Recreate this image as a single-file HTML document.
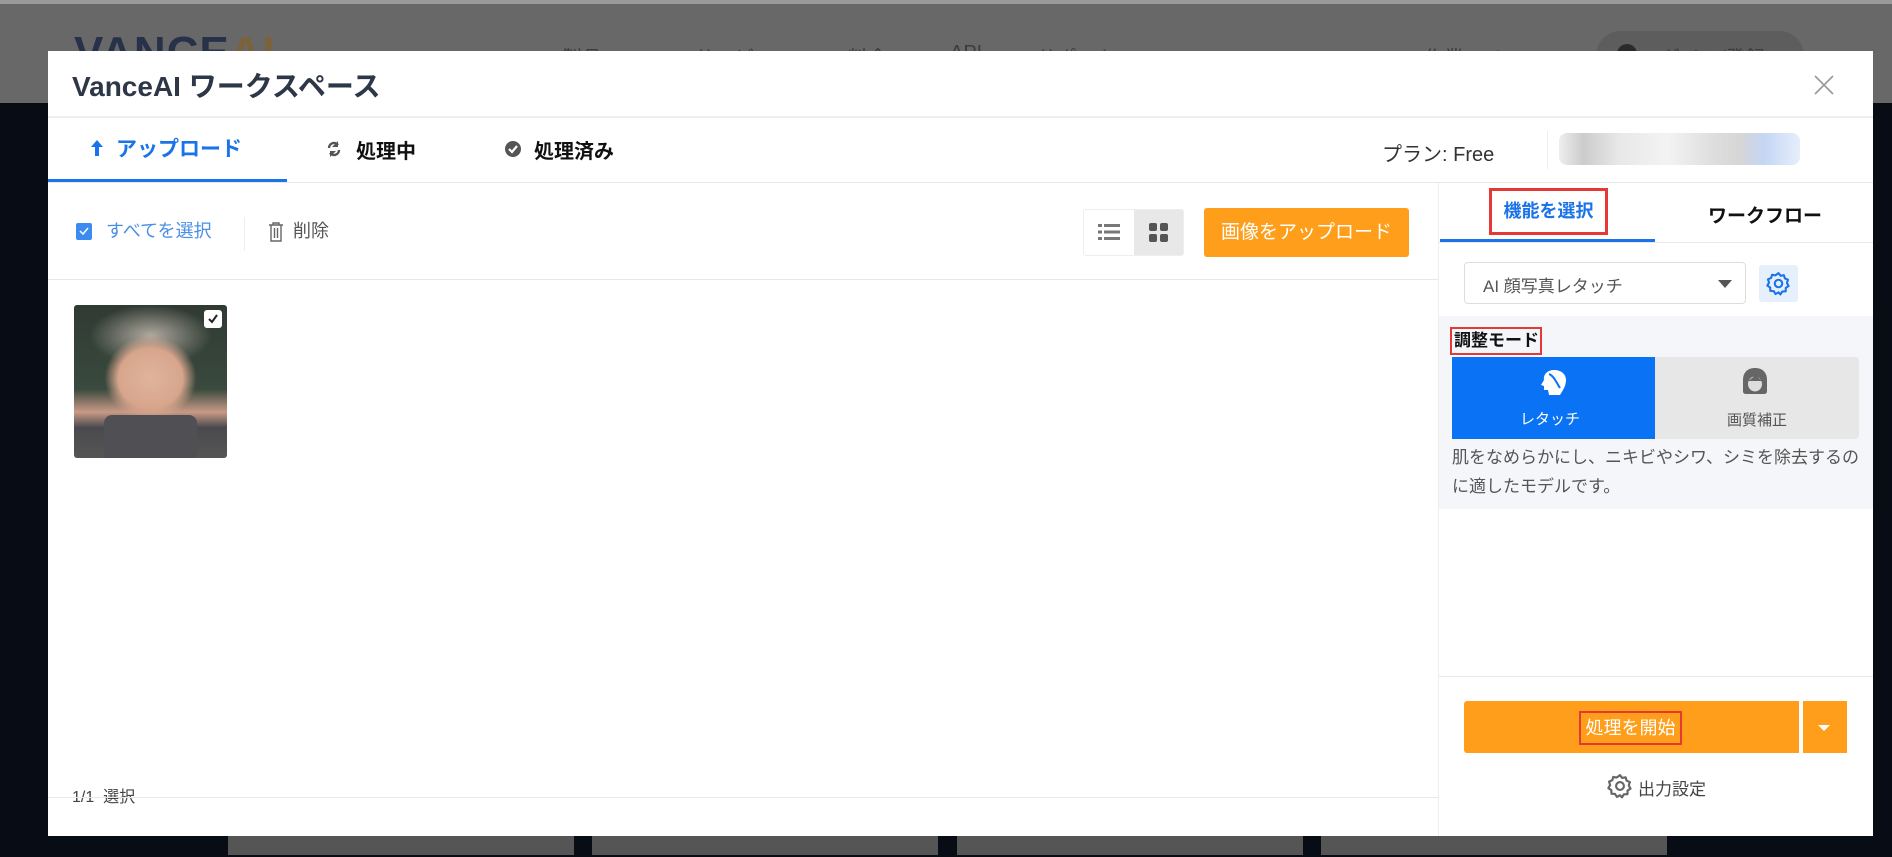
<!DOCTYPE html>
<html><head><meta charset="utf-8"><style>
*{box-sizing:border-box;margin:0;padding:0}
body{width:1892px;height:857px;overflow:hidden;background:#070c15;font-family:"Liberation Sans","Noto Sans CJK JP",sans-serif;position:relative}
.a{position:absolute}
.hdr{left:0;top:0;width:1892px;height:103px;background:#686868;border-top:4px solid #9a9a9a}
.hdr span{position:absolute;top:38px;font-size:20px;color:#3c3c3c}
.modal{left:48px;top:51px;width:1825px;height:785px;background:#fff}
.line{background:#e8e8e8;height:1px}
.t{white-space:nowrap}
</style></head><body>
<div class="a hdr">
 <div class="a t" style="left:74px;top:24px;font-size:44px;font-weight:bold;color:#27324a;letter-spacing:1px">VANCE<span style="position:static;color:#7c6238;font-size:44px">AI</span></div>
 <span style="left:562px">製品</span><span style="left:676px">AIサービス</span><span style="left:848px">料金</span><span style="left:950px">API</span><span style="left:1037px">サポート</span><span style="left:1424px">作業スペース</span>
 <div class="a" style="left:1596px;top:27px;width:208px;height:50px;border-radius:25px;background:#5d5d5d"></div>
 <span style="left:1640px">ログイン/登録</span>
 <div class="a" style="left:1617px;top:40px;width:20px;height:24px;border-radius:10px;background:#2a2a2a"></div>
</div>
<div class="a" style="left:228px;top:836px;width:346px;height:19px;background:#555"></div>
<div class="a" style="left:592px;top:836px;width:346px;height:19px;background:#555"></div>
<div class="a" style="left:957px;top:836px;width:346px;height:19px;background:#555"></div>
<div class="a" style="left:1321px;top:836px;width:346px;height:19px;background:#555"></div>

<div class="a modal">
 <div class="a t" style="left:24px;top:14px;font-size:28px;font-weight:bold;color:#2d3748">VanceAI ワークスペース</div>
 <svg class="a" style="left:1764px;top:22px" width="24" height="24" viewBox="0 0 24 24"><path d="M3 3L21 21M21 3L3 21" stroke="#999" stroke-width="1.6"/></svg>
 <div class="a line" style="left:0;top:65px;width:1825px;height:2px;background:#eee"></div>
 <!-- tabs -->
 <svg class="a" style="left:42px;top:87px" width="14" height="20" viewBox="0 0 14 20"><path d="M7 2L1 9H5V18H9V9H13Z" fill="#1a73e8"/></svg>
 <div class="a t" style="left:68px;top:82px;font-size:21px;font-weight:bold;color:#1a73e8">アップロード</div>
 <svg class="a" style="left:278px;top:89px" width="16" height="18" viewBox="0 0 16 18"><path d="M3 8A5 5 0 0 1 12 5M13 10A5 5 0 0 1 4 13" stroke="#555" stroke-width="2.4" fill="none"/><path d="M12 1V7H6Z" fill="#555"/><path d="M4 17V11H10Z" fill="#555"/></svg>
 <div class="a t" style="left:308px;top:84px;font-size:20px;font-weight:bold;color:#111">処理中</div>
 <svg class="a" style="left:456px;top:89px" width="18" height="18" viewBox="0 0 18 18"><circle cx="9" cy="9" r="8" fill="#555"/><path d="M5 9L8 12L13 6" stroke="#fff" stroke-width="2.2" fill="none"/></svg>
 <div class="a t" style="left:486px;top:84px;font-size:20px;font-weight:bold;color:#111">処理済み</div>
 <div class="a" style="left:0;top:128px;width:239px;height:3px;background:#1a73e8"></div>
 <div class="a t" style="left:1334px;top:87px;font-size:20px;color:#333">プラン: Free</div>
 <div class="a" style="left:1499px;top:80px;width:1px;height:38px;background:#eee"></div>
 <div class="a" style="left:1511px;top:82px;width:241px;height:32px;border-radius:8px;background:linear-gradient(90deg,#eee 0,#ccc 10%,#e8e8e8 25%,#f3f3f3 45%,#ddd 65%,#d6d6d6 75%,#c4d6f5 85%,#e6eefb 100%)"></div>
 <div class="a line" style="left:0;top:131px;width:1825px"></div>
 <!-- left toolbar -->
 <div class="a" style="left:28px;top:172px;width:16px;height:17px;border-radius:2px;background:#3b8bf0"></div>
 <svg class="a" style="left:30px;top:174px" width="12" height="12" viewBox="0 0 12 12"><path d="M2 6L5 9L10 3" stroke="#fff" stroke-width="1.5" fill="none"/></svg>
 <div class="a t" style="left:58px;top:166px;font-size:18px;color:#4a8fe6">すべてを選択</div>
 <div class="a" style="left:196px;top:166px;width:1px;height:34px;background:#eee"></div>
 <svg class="a" style="left:220px;top:170px" width="16" height="22" viewBox="0 0 16 22"><path d="M1 4H15M5 4V2H11V4M3 4V20H13V4M6.5 7V17M9.5 7V17" stroke="#666" stroke-width="1.4" fill="none"/></svg>
 <div class="a t" style="left:245px;top:166px;font-size:18px;color:#555">削除</div>
 <div class="a" style="left:1035px;top:158px;width:101px;height:47px;border:1px solid #eee;border-radius:3px"></div>
 <div class="a" style="left:1086px;top:159px;width:49px;height:45px;background:#e8e8e8"></div>
 <svg class="a" style="left:1050px;top:172px" width="22" height="18" viewBox="0 0 22 18"><g fill="#777"><rect x="0" y="1" width="4" height="3"/><rect x="6" y="1" width="16" height="3"/><rect x="0" y="7.5" width="4" height="3"/><rect x="6" y="7.5" width="16" height="3"/><rect x="0" y="14" width="4" height="3"/><rect x="6" y="14" width="16" height="3"/></g></svg>
 <svg class="a" style="left:1101px;top:172px" width="19" height="19" viewBox="0 0 19 19"><g fill="#555"><rect x="0" y="0" width="8" height="8" rx="2"/><rect x="11" y="0" width="8" height="8" rx="2"/><rect x="0" y="11" width="8" height="8" rx="2"/><rect x="11" y="11" width="8" height="8" rx="2"/></g></svg>
 <div class="a t" style="left:1156px;top:157px;width:205px;height:49px;background:#ff9e1b;border-radius:3px;color:#fff;font-size:19px;text-align:center;line-height:49px">画像をアップロード</div>
 <div class="a line" style="left:0;top:228px;width:1390px"></div>
 <!-- thumb -->
 <div class="a" style="left:26px;top:254px;width:153px;height:153px;border-radius:3px;overflow:hidden;background:radial-gradient(ellipse 30% 28% at 50% 48%,#e0b49c 0,#d7a58c 70%,transparent 100%),radial-gradient(ellipse 40% 20% at 50% 20%,#b0a89e 0,transparent 100%),linear-gradient(180deg,#2f3a33 0,#3a4a3e 55%,#c99a86 70%,#4a4a4e 80%,#555 100%)">
  <div class="a" style="left:30px;top:110px;width:93px;height:43px;background:#505054;border-radius:8px 8px 0 0"></div>
  <div class="a" style="left:130px;top:5px;width:18px;height:18px;background:#fff;border-radius:3px"></div>
  <svg class="a" style="left:133px;top:8px" width="12" height="12" viewBox="0 0 12 12"><path d="M2 6L5 9L10 2" stroke="#222" stroke-width="2" fill="none"/></svg>
 </div>
 <div class="a t" style="left:24px;top:732px;font-size:16px;color:#444">1/1&nbsp; 選択</div>
 <div class="a line" style="left:0;top:746px;width:1390px"></div>
 <!-- right panel -->
 <div class="a" style="left:1390px;top:132px;width:1px;height:653px;background:#eee"></div>
 <div class="a t" style="left:1441px;top:137px;width:119px;height:47px;border:3px solid #e53935;color:#1a73e8;font-weight:bold;font-size:18px;text-align:center;line-height:41px">機能を選択</div>
 <div class="a" style="left:1392px;top:188px;width:215px;height:3px;background:#1a73e8"></div>
 <div class="a t" style="left:1660px;top:150px;font-size:19px;font-weight:bold;color:#111">ワークフロー</div>
 <div class="a line" style="left:1391px;top:191px;width:434px"></div>
 <div class="a" style="left:1416px;top:211px;width:282px;height:42px;border:1px solid #ddd;border-radius:4px"></div>
 <div class="a t" style="left:1435px;top:221px;font-size:17px;color:#555">AI 顔写真レタッチ</div>
 <div class="a" style="left:1670px;top:229px;border-left:7px solid transparent;border-right:7px solid transparent;border-top:8px solid #555"></div>
 <div class="a" style="left:1711px;top:214px;width:39px;height:37px;background:#e6f0fd;border-radius:3px"></div>
 <svg class="a" style="left:1718px;top:220px" width="25" height="25" viewBox="0 0 24 24"><path d="M12 2l2 2.6 3.2-.6.9 3.1 3 1.3-1 3.1 1.6 2.9-2.7 1.8-.1 3.3-3.3.2-1.8 2.8L12 20.5 9.2 22.1 7.4 19.3 4.1 19.1 4 15.8 1.3 14 2.9 11.1 1.9 8 4.9 6.7 5.8 3.6 9 4.2z" fill="none" stroke="#1a73e8" stroke-width="2" stroke-linejoin="round"/><circle cx="12" cy="12" r="3.6" fill="none" stroke="#1a73e8" stroke-width="2"/></svg>
 <div class="a" style="left:1391px;top:265px;width:434px;height:193px;background:#f5f6f9"></div>
 <div class="a t" style="left:1402px;top:276px;width:92px;height:28px;border:2px solid #e53935;font-size:17px;font-weight:bold;color:#111;line-height:24px;padding-left:2px">調整モード</div>
 <div class="a" style="left:1404px;top:306px;width:203px;height:82px;background:#0a72f5"></div>
 <div class="a" style="left:1607px;top:306px;width:204px;height:82px;background:#e7e7e7;border-radius:0 4px 4px 0"></div>
 <svg class="a" style="left:1490px;top:317px" width="30" height="30" viewBox="0 0 30 30"><path d="M16 2C9 2 5 7 6 12L3 17 6 18 6 22 10 22 11 27 22 27C25 22 28 18 28 12 28 6 23 2 16 2Z" fill="#fff"/><path d="M11 6C16 8 18 14 22 20" stroke="#0a72f5" stroke-width="2" fill="none"/></svg>
 <div class="a t" style="left:1472px;top:357px;font-size:15px;color:#fff">レタッチ</div>
 <svg class="a" style="left:1694px;top:316px" width="26" height="28" viewBox="0 0 26 28"><path d="M13 1C5 1 1 6 1 13V24Q1 27 4 27H22Q25 27 25 24V13C25 6 21 1 13 1Z" fill="#666"/><ellipse cx="13" cy="17" rx="7" ry="7.5" fill="#ddd"/><path d="M6 14C9 12 13 9 14 7 16 11 19 13 20 14" fill="#666"/></svg>
 <div class="a t" style="left:1679px;top:358px;font-size:15px;color:#555">画質補正</div>
 <div class="a" style="left:1404px;top:392px;width:420px;font-size:17px;line-height:29px;color:#555">肌をなめらかにし、ニキビやシワ、シミを除去するのに適したモデルです。</div>
 <div class="a line" style="left:1391px;top:625px;width:434px"></div>
 <div class="a" style="left:1416px;top:650px;width:335px;height:52px;background:#ff9e1b;border-radius:3px 0 0 3px"></div>
 <div class="a" style="left:1755px;top:650px;width:44px;height:52px;background:#ff9e1b"></div>
 <div class="a" style="left:1770px;top:674px;border-left:6px solid transparent;border-right:6px solid transparent;border-top:6px solid #fff"></div>
 <div class="a t" style="left:1531px;top:660px;width:103px;height:34px;border:2px solid #e53935;color:#fff;font-size:18px;text-align:center;line-height:30px">処理を開始</div>
 <svg class="a" style="left:1559px;top:722px" width="26" height="26" viewBox="0 0 24 24"><path d="M12 2l2 2.6 3.2-.6.9 3.1 3 1.3-1 3.1 1.6 2.9-2.7 1.8-.1 3.3-3.3.2-1.8 2.8L12 20.5 9.2 22.1 7.4 19.3 4.1 19.1 4 15.8 1.3 14 2.9 11.1 1.9 8 4.9 6.7 5.8 3.6 9 4.2z" fill="none" stroke="#666" stroke-width="2" stroke-linejoin="round"/><circle cx="12" cy="12" r="3.6" fill="none" stroke="#666" stroke-width="2"/></svg>
 <div class="a t" style="left:1590px;top:724px;font-size:17px;color:#444">出力設定</div>
</div>
</body></html>
